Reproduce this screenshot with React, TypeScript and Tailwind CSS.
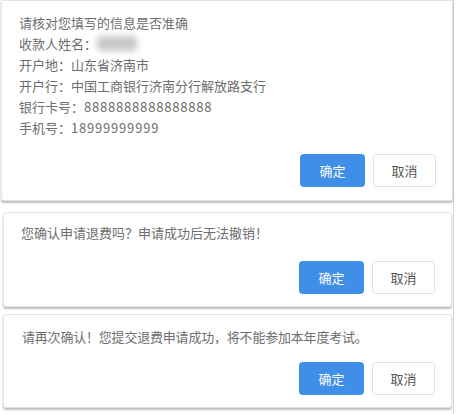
import React from "react";

const font = { fontFamily: '"Noto Sans CJK SC", "Microsoft YaHei", sans-serif' };

function Buttons() {
  return (
    <div className="flex justify-end gap-[8px] pr-[16px]">
      <button className="w-[65px] h-[33px] rounded-[4px] bg-[#3f8ee8] text-white text-[13px]">确定</button>
      <button className="w-[63px] h-[33px] rounded-[4px] bg-white border border-[#e2e2e2] text-[#555] text-[13px]">取消</button>
    </div>
  );
}

export default function App() {
  return (
    <div className="relative w-[456px] h-[414px] bg-white overflow-hidden text-[#6e6e6e]" style={font}>
      <div className="absolute right-[2px] top-0 bottom-0 w-px bg-[#d8d8d8]" />
      <div className="relative flex flex-col">
        <div className="ml-[1px] w-[452px] h-[201px] bg-white border border-[#e4e4e4] rounded-b-[3px] shadow-[0_2px_2px_rgba(0,0,0,0.25)] pt-[11px]">
          <div className="pl-[17px] text-[13px] leading-[21px]">
            <div>请核对您填写的信息是否准确</div>
            <div className="flex items-center">
              收款人姓名：
              <span className="inline-block w-[40px] h-[15px] bg-[#c8c8c8] blur-[3px] rounded" />
            </div>
            <div>开户地：山东省济南市</div>
            <div>开户行：中国工商银行济南分行解放路支行</div>
            <div>银行卡号：<span className="tracking-[0.8px]">8888888888888888</span></div>
            <div>手机号：<span className="tracking-[0.8px]">18999999999</span></div>
          </div>
          <div className="mt-[16px]">
            <Buttons />
          </div>
        </div>
        <div className="mt-[11px] ml-[3px] w-[449px] h-[95px] bg-white border border-[#e4e4e4] rounded-[3px] shadow-[0_2px_2px_rgba(0,0,0,0.25)] pt-[9px]">
          <div className="pl-[17px] text-[13px] leading-[21px]">您确认申请退费吗？申请成功后无法撤销！</div>
          <div className="mt-[18px]">
            <Buttons />
          </div>
        </div>
        <div className="mt-[7px] ml-[3px] w-[449px] h-[94px] bg-white border border-[#e4e4e4] rounded-[3px] shadow-[0_2px_2px_rgba(0,0,0,0.25)] pt-[11px]">
          <div className="pl-[18px] text-[13px] leading-[21px] tracking-[-0.2px]">请再次确认！您提交退费申请成功，将不能参加本年度考试。</div>
          <div className="mt-[15px]">
            <Buttons />
          </div>
        </div>
      </div>
    </div>
  );
}
